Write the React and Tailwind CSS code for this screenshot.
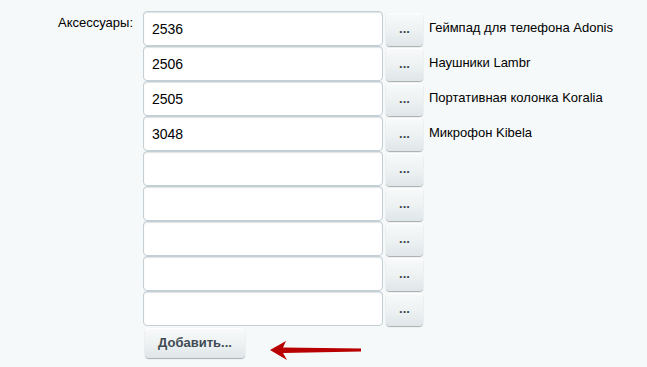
import React from 'react';

const ROWS = [
  { id: '2536', name: 'Геймпад для телефона Adonis' },
  { id: '2506', name: 'Наушники Lambr' },
  { id: '2505', name: 'Портативная колонка Koralia' },
  { id: '3048', name: 'Микрофон Kibela' },
  { id: '', name: '' },
  { id: '', name: '' },
  { id: '', name: '' },
  { id: '', name: '' },
  { id: '', name: '' },
];

const btn =
  'rounded-[4px] bg-gradient-to-b from-[#f8fafb] via-[#eef2f3] to-[#dfe6e9] text-[#3f4b54] font-bold shadow-[0_0_1px_rgba(0,0,0,0.15),0_1px_1px_rgba(0,0,0,0.3),inset_0_1px_0_#fff]';

export default function App() {
  return (
    <div className="w-[647px] h-[367px] bg-[#f5f9f9] font-['Liberation_Sans',Arial,sans-serif] text-[13px] text-black overflow-hidden">
      <div className="flex pt-[11px]">
        <div className="w-[135px] pr-[2px] text-right pt-[2px] text-[#000]">Аксессуары:</div>
        <div className="ml-[8px] flex flex-col">
          {ROWS.map((r, i) => (
            <div key={i} className="flex items-start h-[35px]">
              <input
                readOnly
                value={r.id}
                className="w-[240px] h-[35px] rounded-[4px] border border-[#c3ced5] bg-white px-[8px] text-[14px] text-black outline-none shadow-[inset_0_1px_1px_rgba(180,188,191,0.4)]"
              />
              <button className={`${btn} ml-[3px] mt-[2px] w-[37px] h-[33px] text-[13px] leading-none pb-[2px]`}>...</button>
              {r.name && <span className="ml-[6px] pt-[10px] leading-none text-[#000]">{r.name}</span>}
            </div>
          ))}
          <div className="flex items-start mt-[2px]">
            <button className={`${btn} ml-[2px] w-[100px] h-[30px] text-[13px]`}>Добавить...</button>
            <svg width="96" height="22" viewBox="0 0 96 22" className="ml-[23px] mt-[12px]">
              <path d="M2 10 L18 1 L15 7.5 L93 8.5 L93 11.5 L15 13 L19 20 Z" fill="#b80000" />
            </svg>
          </div>
        </div>
      </div>
    </div>
  );
}
